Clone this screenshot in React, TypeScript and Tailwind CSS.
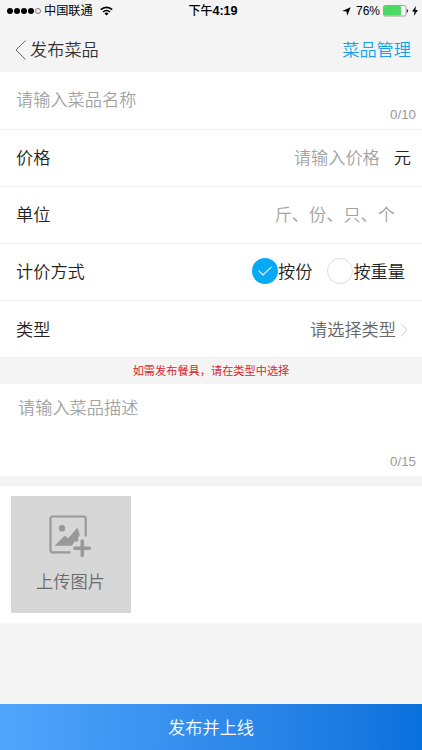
import type { ReactNode } from "react";

function StatusBar() {
  return (
    <div className="grid h-[22px] grid-cols-3 items-center px-[7px] text-[12px] leading-none text-black">
      <div className="flex items-center">
        <div className="flex gap-px">
          {[true, true, true, true, false].map((filled, i) => (
            <span
              key={i}
              className={filled ? "size-[6px] rounded-full bg-black" : "size-[6px] rounded-full border-[0.5px] border-[#777]"}
            />
          ))}
        </div>
        <span className="ml-[3px] whitespace-nowrap text-[12.2px]">中国联通</span>
        <svg className="ml-[7px] shrink-0" width="13" height="10" viewBox="0 0 13 10" fill="none" stroke="#000" strokeWidth="1.7">
          <path d="M0.8 3.7a8.1 8.1 0 0 1 11.4 0" />
          <path d="M3 6a5 5 0 0 1 7 0" />
          <path d="M6.5 9.6L4.5 7.6a2.8 2.8 0 0 1 4 0z" fill="#000" stroke="none" />
        </svg>
      </div>
      <div className="pl-[4px] text-center font-medium">
        下午<span className="text-[12.6px] font-bold">4:19</span>
      </div>
      <div className="-mr-[3px] flex items-center justify-end">
        <svg width="9" height="9" viewBox="0 0 9 9">
          <path d="M8.7 0.3L5.2 8.7 4.5 4.6 0.2 4z" fill="#000" />
        </svg>
        <span className="ml-[5px]">76%</span>
        <svg className="ml-[3px]" width="26" height="12" viewBox="0 0 26 12">
          <rect x="0.5" y="0.5" width="22.5" height="10.5" rx="1.6" fill="#fff" stroke="#777" strokeWidth="0.7" />
          <rect x="1" y="1" width="17" height="9.5" rx="1" fill="#4cd964" />
          <path d="M23.8 4c1.8 0.4 1.8 3.4 0 3.8z" fill="#333" />
        </svg>
        <svg className="ml-[3px]" width="6" height="10" viewBox="0 0 6 10">
          <path d="M4 0L0 5.6h2.5L1.8 10 6 4H3.4z" fill="#000" />
        </svg>
      </div>
    </div>
  );
}

function Row({ label, className = "", children }: { label: string; className?: string; children: ReactNode }) {
  return (
    <div className={`flex h-[57px] items-center justify-between border-b border-[#f0f0f0] pl-[16px] ${className}`}>
      <span className="text-[#222]">{label}</span>
      {children}
    </div>
  );
}

export default function App() {
  return (
    <div className="flex h-[750px] w-[422px] flex-col overflow-hidden bg-[#f4f4f4] font-['Liberation_Sans','Noto_Sans_CJK_SC',sans-serif] text-[17.2px] leading-[24px]">
      <StatusBar />
      <header className="flex h-[50px] items-center justify-between pb-px pl-[15px] pr-[11px] pt-[7px] font-[350]">
        <div className="flex items-center text-[#333]">
          <svg width="12" height="20" viewBox="0 0 12 20" fill="none" stroke="#555" strokeWidth="0.9">
            <path d="M10.5 0.5L1 10l9.5 9.5" />
          </svg>
          <span className="ml-[3px]">发布菜品</span>
        </div>
        <span className="text-[#12a0e8]">菜品管理</span>
      </header>

      <div className="bg-white font-[350]">
        <div className="flex h-[58px] justify-between border-b border-[#f0f0f0] pl-[16px] pr-[6px]">
          <span className="mt-[16px] text-[#a3a3a3]">请输入菜品名称</span>
          <span className="mt-[31px] text-[13.3px] text-[#999]">0/10</span>
        </div>
        <Row label="价格">
          <div className="flex pr-[11px]">
            <span className="text-[#a3a3a3]">请输入价格</span>
            <span className="ml-[14px] text-[#222]">元</span>
          </div>
        </Row>
        <Row label="单位">
          <span className="pr-[27px] text-[#a3a3a3]">斤、份、只、个</span>
        </Row>
        <Row label="计价方式">
          <div className="flex items-center pr-[17px] text-[#222]">
            <span className="mb-[2px] flex size-[26px] items-center justify-center rounded-full bg-[#05a9f4]">
              <svg width="14" height="10" viewBox="0 0 14 10" fill="none" stroke="#fff" strokeWidth="1.1">
                <path d="M0.6 4.6L5 9 13.4 0.8" />
              </svg>
            </span>
            <span>按份</span>
            <span className="mb-[2px] ml-[15px] size-[26px] rounded-full border border-[#ddd]" />
            <span>按重量</span>
          </div>
        </Row>
        <Row label="类型" className="pt-px">
          <div className="flex items-center pr-[14px] text-[#666]">
            <span>请选择类型</span>
            <svg className="ml-[4px]" width="8" height="14" viewBox="0 0 8 14" fill="none" stroke="#ccc" strokeWidth="0.9">
              <path d="M0.8 0.6L7 7 0.8 13.4" />
            </svg>
          </div>
        </Row>
      </div>

      <p className="flex h-[26px] items-center justify-center text-[11.2px] text-[#d9252b]">如需发布餐具，请在类型中选择</p>

      <div className="flex h-[92px] justify-between bg-white pl-[18px] pr-[6px]">
        <span className="mt-[12px] font-[350] text-[#a3a3a3]">请输入菜品描述</span>
        <span className="mt-[66px] text-[13.3px] text-[#999]">0/15</span>
      </div>

      <div className="mt-[10px] h-[137px] bg-white pl-[10.5px] pt-[10px]">
        <div className="flex h-[117px] w-[120px] flex-col items-center bg-[#d7d7d7] pt-[19px] text-[#6b6b6b]">
          <svg className="mr-[2px]" width="42" height="43" viewBox="0 0 42 43" fill="none" stroke="#999">
            <path d="M21.5 37.3H3.5a2 2 0 0 1-2-2V3.5a2 2 0 0 1 2-2h31.2a2 2 0 0 1 2 2v18" strokeWidth="2.2" />
            <circle cx="13" cy="13.2" r="3.2" fill="#999" stroke="none" />
            <path d="M5.5 30.7L15.7 20.7l3.5 2.5L28.5 12.5l2.4 8-1.6 1.5-0.3 4.5h-3.5l-2.5 4.2z" fill="#999" stroke="none" />
            <path d="M33.3 26v14.5M26 33.2H40.3" strokeWidth="3.6" strokeLinecap="round" />
          </svg>
          <span className="mt-[12px] font-[350]">上传图片</span>
        </div>
      </div>

      <button className="mt-auto h-[46px] bg-linear-to-r from-[#50a5fc] to-[#0871dc] pt-px font-[350] text-white">发布并上线</button>
    </div>
  );
}
